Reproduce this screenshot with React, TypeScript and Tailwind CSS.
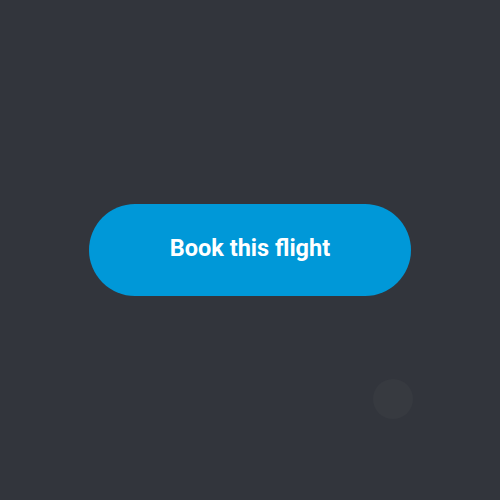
export default function App() {
  return (
    <div
      className="relative w-[500px] h-[500px] bg-[#32353c] flex items-center justify-center"
      style={{ fontFamily: "Roboto, 'Liberation Sans', sans-serif" }}
    >
      <button className="w-[322px] h-[92px] rounded-full bg-[#0098d8] text-white text-[23.5px] leading-[28px] font-bold pb-[4px]">
        Book this flight
      </button>
      <div className="absolute left-[373px] top-[379px] w-[40px] h-[40px] rounded-full bg-[#373a40]" />
    </div>
  );
}
